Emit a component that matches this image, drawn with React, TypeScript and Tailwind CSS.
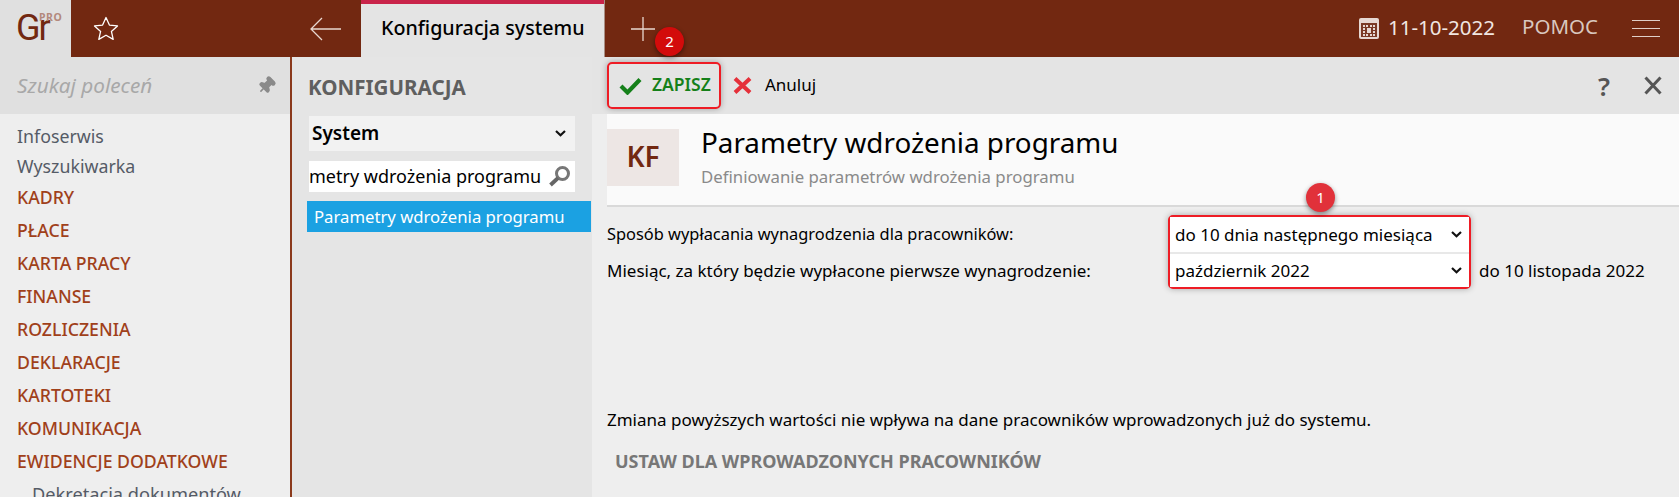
import { Pin } from 'lucide-react';

const topItems = ['Infoserwis', 'Wyszukiwarka'];
const sections = ['KADRY', 'PŁACE', 'KARTA PRACY', 'FINANSE', 'ROZLICZENIA', 'DEKLARACJE', 'KARTOTEKI', 'KOMUNIKACJA', 'EWIDENCJE DODATKOWE'];

function Badge({ n, className }: { n: string; className: string }) {
  return (
    <span className={`absolute z-20 flex h-[29px] w-[29px] items-center justify-center rounded-full text-[15px] text-white shadow-[0_2px_5px_rgba(0,0,0,0.45)] ${className}`}>
      {n}
    </span>
  );
}

function Chevron() {
  return (
    <svg width="11" height="7" viewBox="0 0 11 7" fill="none" stroke="#111111" strokeWidth="2.2">
      <path d="M1 1l4.5 4.2L10 1" />
    </svg>
  );
}

function Header() {
  return (
    <header className="flex h-[57px] shrink-0 bg-[#722811]">
      <div className="relative w-[71px] shrink-0 bg-[#e0e0e0]">
        <span className="absolute left-[16px] top-[7px] font-['Roboto',sans-serif] text-[36px] leading-[42px] tracking-[-2px] text-[#722811]">Gr</span>
        <span className="absolute left-[39px] top-[12px] text-[10.500px] font-bold leading-[11px] tracking-[0.5px] text-[#b3897c]">PRO</span>
      </div>
      <div className="flex w-[70px] items-center justify-center">
        <svg width="26" height="25" viewBox="0 0 26 25" fill="none" stroke="#ffffff" strokeWidth="1.3" strokeLinejoin="round">
          <path d="M13 1.500l3.400 7.600 8.100.8-6.100 5.500 1.800 8-7.200-4.200-7.200 4.200 1.800-8L1.500 9.900l8.100-.8z" />
        </svg>
      </div>
      <div className="flex w-[220px] items-center justify-end pr-[20px]">
        <svg width="31" height="24" viewBox="0 0 31 24" fill="none" stroke="#e8d7d0" strokeWidth="1.3">
          <path d="M1 12h30M12 1 1 12l11 11" />
        </svg>
      </div>
      <div className="flex w-[243px] flex-col bg-[#e4e4e4]">
        <div className="h-[4px] bg-[#c9244a]" />
        <div className="flex flex-1 items-center pb-[5px] pl-[20px] text-[19.700px] font-medium text-black">Konfiguracja systemu</div>
      </div>
      <div className="flex w-[76px] items-center justify-center border-l border-[#a98f85]">
        <svg width="24" height="24" viewBox="0 0 24 24" stroke="#e8d7d0" strokeWidth="1.3">
          <path d="M12 0v24M0 12h24" />
        </svg>
      </div>
      <div className="flex flex-1 items-center justify-end pr-[19px]">
        <svg width="20" height="21" viewBox="0 0 20 21">
          <rect width="20" height="21" rx="2" fill="#e6d8d3" />
          <rect x="2" y="5" width="16" height="14" fill="#7a3a26" />
          <path d="M4 7h2v2H4zm3 0h2v2H7zm4 0h2v2h-2zm3 0h2v2h-2zM4 10h2v2H4zm10 0h2v2h-2zM4 13h2v2H4zm10 0h2v2h-2zM4 16h2v2H4zm3 0h2v2H7zm4 0h2v2h-2zm3 0h2v2h-2zM8 10h4v5H8z" fill="#e6d8d3" />
        </svg>
        <span className="mb-[4px] ml-[9px] text-[20.500px] leading-[28px] text-[#f1e6e1]">11-10-2022</span>
        <span className="mb-[5px] ml-[27px] text-[20.500px] leading-[28px] text-[#d9c7bf]">POMOC</span>
        <div className="ml-[34px] flex w-[28px] flex-col gap-[6.500px]">
          <div className="h-[1.500px] bg-[#e0cfc8]" />
          <div className="h-[1.500px] bg-[#e0cfc8]" />
          <div className="h-[1.500px] bg-[#e0cfc8]" />
        </div>
      </div>
    </header>
  );
}

function Sidebar() {
  return (
    <aside className="flex w-[292px] shrink-0 flex-col overflow-hidden border-r-2 border-[#8b3a1c] bg-[#eeeeee]">
      <div className="flex h-[57px] shrink-0 items-center justify-between bg-[#e0e0e0] pl-[17px] pr-[14px]">
        <span className="text-[20.700px] italic text-[#a8a8a8]">Szukaj poleceń</span>
        <Pin size={19} fill="#8a8a8a" className="rotate-45 text-[#8a8a8a]" />
      </div>
      <div className="flex flex-col pl-[17px] pt-[8px]">
        {topItems.map((item) => (
          <div key={item} className="h-[30px] text-[17.800px] leading-[29px] text-[#555b66]">{item}</div>
        ))}
        {sections.map((item) => (
          <div key={item} className="h-[33px] text-[17.700px] font-medium leading-[31px] text-[#a0401a]">{item}</div>
        ))}
        <div className="pl-[15px] text-[18.200px] leading-[30px] text-[#555b66]">Dekretacja dokumentów</div>
      </div>
    </aside>
  );
}

function ConfigPanel() {
  return (
    <section className="flex w-[300px] shrink-0 flex-col bg-[#e5e5e5] pl-[16px]">
      <h2 className="mt-[18px] text-[20.600px] font-bold leading-[24px] text-[#5f5f5f]">KONFIGURACJA</h2>
      <div className="ml-[1px] mt-[17px] flex h-[35px] w-[266px] items-center justify-between bg-[#f2f2f2] pl-[3px] pr-[9px] text-[19px] font-semibold text-black">
        System
        <Chevron />
      </div>
      <div className="ml-[1px] mt-[10px] flex h-[31px] w-[266px] items-center justify-between overflow-hidden bg-white text-[18px] text-black">
        <span>metry wdrożenia programu</span>
        <svg width="23" height="21" viewBox="0 0 23 21" fill="none" className="mr-[4px] shrink-0">
          <circle cx="14.500" cy="7.500" r="6" stroke="#777777" strokeWidth="3" />
          <path d="M10 12 2.500 19" stroke="#666666" strokeWidth="3.800" />
        </svg>
      </div>
      <div className="-ml-[1px] mt-[9px] flex h-[31px] w-[284px] items-center bg-[#1ba1e2] pl-[7px] text-[16.700px] text-white">Parametry wdrożenia programu</div>
    </section>
  );
}

function Toolbar() {
  return (
    <div className="flex h-[57px] shrink-0 items-center justify-between bg-[#e4e4e4] pl-[15px] pr-[17px]">
      <div className="flex items-center">
        <button className="flex h-[47px] w-[114px] items-center gap-[10px] rounded-[5px] border-2 border-[#ee1c25] pl-[10px] text-[17.500px] font-semibold text-[#15801a] shadow-[0_0_6px_rgba(0,0,0,0.3)]">
          <svg width="23" height="18" viewBox="0 0 23 18" fill="none" stroke="#15801a" strokeWidth="4.200">
            <path d="M2 9l6.500 6.500L21 2.500" />
          </svg>
          <span className="mb-[3px]">ZAPISZ</span>
        </button>
        <svg width="19" height="17" viewBox="0 0 19 17" fill="none" stroke="#e5303a" strokeWidth="4" className="ml-[12px]">
          <path d="M2 1.500l15 14M17 1.500l-15 14" />
        </svg>
        <span className="mb-[2px] ml-[13px] text-[17px] text-black">Anuluj</span>
      </div>
      <div className="flex items-center gap-[34px] text-[#555555]">
        <span className="text-[26px] font-semibold leading-none">?</span>
        <svg width="18" height="19" viewBox="0 0 18 19" fill="none" stroke="#555555" strokeWidth="3">
          <path d="M1.500 1.500l15 16M16.500 1.500l-15 16" />
        </svg>
      </div>
    </div>
  );
}

function Main() {
  return (
    <main className="relative flex min-w-0 flex-1 flex-col bg-[#eeeeee]">
      <Toolbar />
      <div className="ml-[15px] flex h-[93px] shrink-0 border-b-2 border-[#d9d9d9] bg-[#fafafa]">
        <div className="mt-[15px] flex h-[57px] w-[72px] items-center justify-center bg-[#ede6e4] pb-[3px] text-[28px] font-semibold text-[#722811]">KF</div>
        <div className="ml-[22px] flex flex-col">
          <div className="mt-[9px] text-[27.800px] leading-[38px] text-black">Parametry wdrożenia programu</div>
          <div className="mt-[5px] text-[16.800px] leading-[22px] text-[#8a8a8a]">Definiowanie parametrów wdrożenia programu</div>
        </div>
      </div>
      <div className="flex flex-col pl-[15px] pt-[8px] text-[17px] text-black">
        <div className="flex">
          <div className="flex w-[561px] flex-col gap-[2px] py-[2px]">
            <div className="flex h-[35px] items-center text-[16.400px]">Sposób wypłacania wynagrodzenia dla pracowników:</div>
            <div className="flex h-[33px] items-center">Miesiąc, za który będzie wypłacone pierwsze wynagrodzenie:</div>
          </div>
          <div className="flex w-[303px] flex-col gap-[2px] rounded-[5px] border-2 border-[#ee1c25] bg-[#e8e8e8] shadow-[0_0_6px_rgba(0,0,0,0.3)]">
            <div className="flex h-[35px] items-center justify-between bg-white pl-[5px] pr-[7px]">
              do 10 dnia następnego miesiąca
              <Chevron />
            </div>
            <div className="flex h-[33px] items-center justify-between bg-white pl-[5px] pr-[7px]">
              październik 2022
              <Chevron />
            </div>
          </div>
          <div className="mb-[2px] ml-[8px] flex h-[33px] items-center self-end">do 10 listopada 2022</div>
        </div>
        <div className="mt-[119px] leading-[24px]">Zmiana powyższych wartości nie wpływa na dane pracowników wprowadzonych już do systemu.</div>
        <button className="mt-[17px] self-start pl-[8px] text-[18px] font-bold leading-[24px] text-[#777777]">USTAW DLA WPROWADZONYCH PRACOWNIKÓW</button>
      </div>
    </main>
  );
}

export default function App() {
  return (
    <div className="relative flex h-[497px] w-[1679px] flex-col overflow-hidden bg-[#eeeeee] font-['Noto_Sans',sans-serif]">
      <Header />
      <div className="flex min-h-0 flex-1">
        <Sidebar />
        <ConfigPanel />
        <Main />
      </div>
      <Badge n="2" className="left-[655px] top-[27px] bg-[#d30b0b]" />
      <Badge n="1" className="left-[1306px] top-[183px] bg-[#e1313a]" />
    </div>
  );
}
